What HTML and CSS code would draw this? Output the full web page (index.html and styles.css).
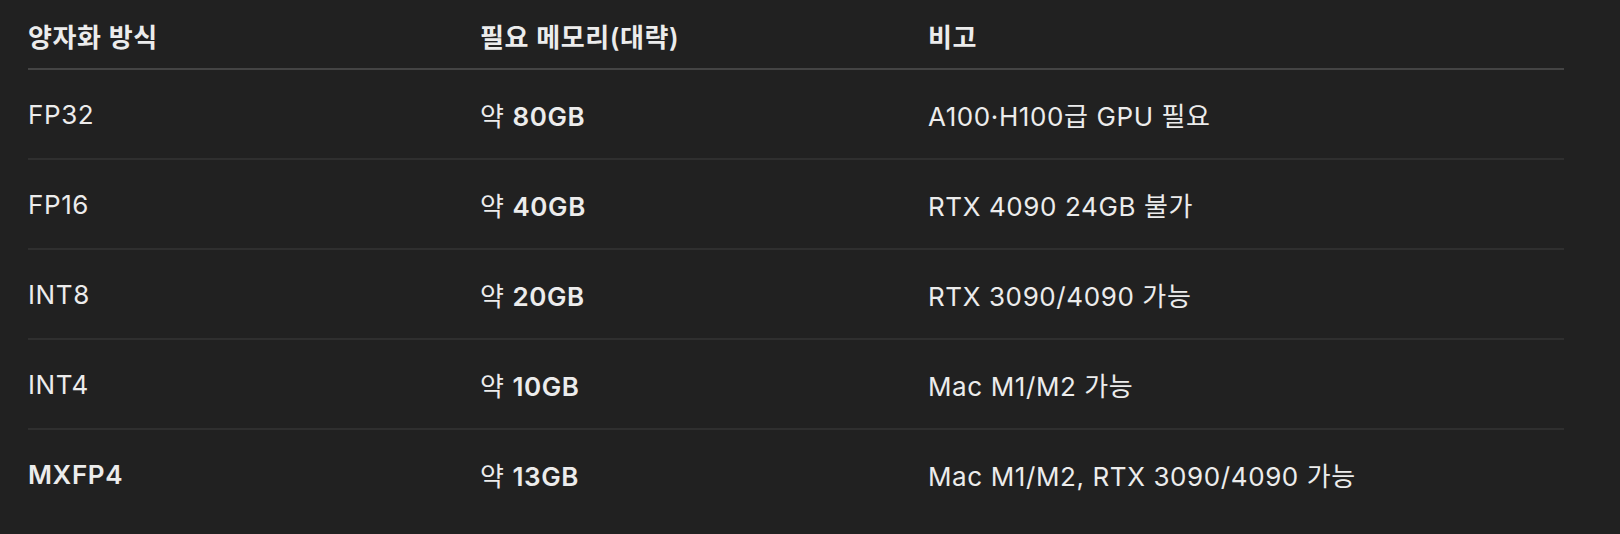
FILE: index.html
```html
<!DOCTYPE html>
<html lang="ko">
<head>
<meta charset="utf-8">
<link rel="stylesheet" href="styles.css">
</head>
<body>
<div class="wrap">
<table class="quant">
  <colgroup>
    <col class="c1"><col class="c2"><col class="c3">
  </colgroup>
  <thead>
    <tr><th>양자화 방식</th><th>필요 메모리(대략)</th><th>비고</th></tr>
  </thead>
  <tbody>
    <tr><td>FP32</td><td>약 <strong>80GB</strong></td><td>A100·H100급 GPU 필요</td></tr>
    <tr><td>FP16</td><td>약 <strong>40GB</strong></td><td>RTX 4090 24GB 불가</td></tr>
    <tr><td>INT8</td><td>약 <strong>20GB</strong></td><td>RTX 3090/4090 가능</td></tr>
    <tr><td>INT4</td><td>약 <strong>10GB</strong></td><td>Mac M1/M2 가능</td></tr>
    <tr><td><strong>MXFP4</strong></td><td>약 <strong>13GB</strong></td><td>Mac M1/M2, RTX 3090/4090 가능</td></tr>
  </tbody>
</table>
</div>
</body>
</html>
```

FILE: styles.css
```css
html, body {
  margin: 0;
  padding: 0;
  background: #212121;
}
body {
  font-family: "Inter", "Noto Sans CJK KR", sans-serif;
  font-size: 26px;
  letter-spacing: 0.6px;
  color: #ececec;
}
.wrap {
  padding: 0 0 0 28px;
}
.quant {
  width: 1536px;
  border-collapse: collapse;
  table-layout: fixed;
}
.c1 { width: 452px; }
.c2 { width: 448px; }
.c3 { width: auto; }
.quant th {
  text-align: left;
  font-weight: 600;
  height: 69px;
  padding: 3px 0 0 0;
  box-sizing: border-box;
  vertical-align: middle;
  border-bottom: 2px solid #444444;
}
.quant td {
  height: 90px;
  padding: 0;
  box-sizing: border-box;
  vertical-align: middle;
  border-bottom: 2px solid #2f2f2f;
}
.quant tbody tr:last-child td {
  border-bottom: none;
}
.quant strong {
  font-weight: 600;
}
```
